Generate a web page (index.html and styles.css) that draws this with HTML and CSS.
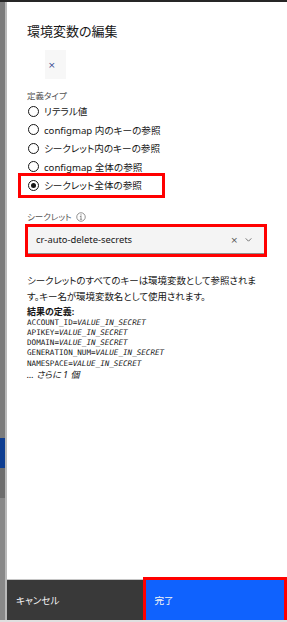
FILE: index.html
```html
<!DOCTYPE html>
<html lang="ja">
<head>
    <meta charset="UTF-8">
    <meta name="viewport" content="width=device-width, initial-scale=1.0">
    <title>環境変数の編集</title>
    <link rel="stylesheet" href="styles.css">
</head>
<body>
    <div class="topbar"></div>

    <div class="screen">
        <!-- Tło strony pod panelem -->
        <div class="backdrop">
            <span class="backdrop-top"></span>
            <span class="backdrop-active"></span>
            <span class="backdrop-mid"></span>
            <span class="backdrop-bottom"></span>
        </div>

        <!-- Panel boczny -->
        <div class="panel">
            <div class="panel-body">
                <h2 class="title">環境変数の編集</h2>
                <button class="tag-close">×</button>

                <div class="label">定義タイプ</div>
                <div class="radios">
                    <label class="radio"><span class="radio-dot"></span>リテラル値</label>
                    <label class="radio"><span class="radio-dot"></span>configmap 内のキーの参照</label>
                    <label class="radio"><span class="radio-dot"></span>シークレット内のキーの参照</label>
                    <label class="radio"><span class="radio-dot"></span>configmap 全体の参照</label>
                    <label class="radio radio-checked marked-row"><span class="radio-dot"></span>シークレット全体の参照</label>
                </div>

                <div class="label label-secret">シークレット
                    <svg class="info-icon" viewBox="0 0 16 16" width="10" height="10">
                        <circle cx="8" cy="8" r="6.8" fill="none" stroke="#6f6f6f" stroke-width="1.2"/>
                        <rect x="7.4" y="6.6" width="1.2" height="5" fill="#6f6f6f"/>
                        <rect x="6.2" y="11" width="3.6" height="1.1" fill="#6f6f6f"/>
                        <rect x="6.2" y="6.6" width="2" height="1.1" fill="#6f6f6f"/>
                        <circle cx="8" cy="4.6" r="0.9" fill="#6f6f6f"/>
                    </svg>
                </div>
                <div class="select marked-box">
                    <span class="select-value">cr-auto-delete-secrets</span>
                    <span class="select-clear">×</span>
                    <svg class="select-chevron" viewBox="0 0 16 16" width="9" height="9">
                        <path d="M3 6 L8 11 L13 6" fill="none" stroke="#525252" stroke-width="1.4"/>
                    </svg>
                </div>

                <p class="description">シークレットのすべてのキーは環境変数として参照されます。キー名が環境変数名として使用されます。</p>

                <div class="result-title">結果の定義:</div>
                <div class="result-lines">
                    <div>ACCOUNT_ID=<i>VALUE_IN_SECRET</i></div>
                    <div>APIKEY=<i>VALUE_IN_SECRET</i></div>
                    <div>DOMAIN=<i>VALUE_IN_SECRET</i></div>
                    <div>GENERATION_NUM=<i>VALUE_IN_SECRET</i></div>
                    <div>NAMESPACE=<i>VALUE_IN_SECRET</i></div>
                </div>
                <div class="result-more">... さらに 1 個</div>
            </div>

            <div class="panel-footer">
                <button class="btn btn-secondary">キャンセル</button>
                <button class="btn btn-primary marked-btn">完了</button>
            </div>
        </div>
    </div>

    <div class="bottombar"></div>
</body>
</html>
```

FILE: styles.css
```css
/* Ustawienia ogólne */
* {
    box-sizing: border-box;
}

html, body {
    height: 100%;
}

body {
    margin: 0;
    font-family: "Noto Sans", "Noto Sans CJK JP", sans-serif;
    font-feature-settings: "palt";
    color: #161616;
    background-color: #fff;
    display: flex;
    flex-direction: column;
    overflow: hidden;
}

.topbar {
    height: 2px;
    background-color: #262626;
}

.bottombar {
    height: 2px;
    background-color: #e0e0e0;
}

.screen {
    flex: 1;
    display: flex;
    min-height: 0;
}

/* Tło pod panelem */
.backdrop {
    width: 7px;
    display: flex;
    flex-direction: column;
    border-right: 2px solid #b9b9b9;
}

.backdrop span {
    display: block;
    width: 100%;
}

.backdrop-top {
    height: 436px;
    background-color: #7b7b7b;
}

.backdrop-active {
    height: 30px;
    background-color: #0e3d91;
}

.backdrop-mid {
    height: 30px;
    background-color: #6d6d6d;
}

.backdrop-bottom {
    flex: 1;
    background-color: #888;
}

/* Panel */
.panel {
    flex: 1;
    display: flex;
    flex-direction: column;
    background-color: #fff;
}

.panel-body {
    flex: 1;
    padding: 21px 23px 0 20px;
}

.title {
    margin: 0;
    font-size: 13px;
    font-weight: 400;
    line-height: 16px;
}

.tag-close {
    display: block;
    margin: 11px 0 0 18px;
    width: 21px;
    height: 29px;
    padding: 0 0 0 3px;
    border: none;
    background-color: #f7f7f7;
    color: #34478f;
    font-family: "DejaVu Sans", sans-serif;
    font-size: 9px;
    text-align: left;
}

.label {
    margin-top: 11px;
    font-size: 8.5px;
    line-height: 12px;
    color: #525252;
}

/* Przyciski radio */
.radios {
    display: flex;
    flex-direction: column;
}

.radio {
    display: flex;
    align-items: center;
    height: 18.5px;
    font-size: 9.6px;
    gap: 5px;
}

.radio-dot {
    width: 11px;
    height: 11px;
    border: 1px solid #161616;
    border-radius: 50%;
    display: flex;
    align-items: center;
    justify-content: center;
    margin-left: 1px;
}

.radio-checked .radio-dot::after {
    content: "";
    width: 5px;
    height: 5px;
    border-radius: 50%;
    background-color: #161616;
}

/* Czerwone ramki z zrzutu */
.marked-row {
    margin-left: -6px;
    padding-left: 6px;
    width: 141px;
    outline: 3px solid #f00;
}

.marked-box {
    outline: 3px solid #f00;
}

.label-secret {
    margin-top: 16px;
    display: flex;
    align-items: center;
    gap: 4px;
}

.info-icon {
    display: block;
}

/* Pole wyboru */
.select {
    margin: 4px 0 0 1px;
    height: 27px;
    display: flex;
    align-items: center;
    padding: 0 11px 0 8px;
    background-color: #f4f4f4;
    border-bottom: 1px solid #8d8d8d;
}

.select-value {
    flex: 1;
    font-size: 9.4px;
}

.select-clear {
    font-family: "DejaVu Sans", sans-serif;
    font-size: 9px;
    color: #525252;
    margin-right: 6px;
}

.select-chevron {
    display: block;
}

.description {
    margin: 19px 0 0 0;
    font-size: 9.45px;
    line-height: 16px;
}

.result-title {
    margin-top: 1px;
    font-size: 9px;
    font-weight: 700;
    line-height: 12px;
}

.result-lines {
    font-family: "DejaVu Sans Mono", monospace;
    font-size: 7.6px;
    line-height: 10.3px;
    color: #161616;
}

.result-more {
    font-size: 9px;
    font-style: italic;
    line-height: 11px;
}

/* Stopka panelu */
.panel-footer {
    height: 41px;
    display: flex;
    border-top: 1px solid #c6c6c6;
}

.btn {
    flex: 1;
    border: none;
    text-align: left;
    padding: 0 0 0 9px;
    font-family: "Noto Sans", "Noto Sans CJK JP", sans-serif;
    font-feature-settings: "palt";
    font-size: 9.6px;
    color: #f4f4f4;
}

.btn-secondary {
    background-color: #393939;
}

.btn-primary {
    background-color: #0f62fe;
    margin-right: 3px;
}

.marked-btn {
    outline: 3px solid #f00;
    outline-offset: 0;
}
```
